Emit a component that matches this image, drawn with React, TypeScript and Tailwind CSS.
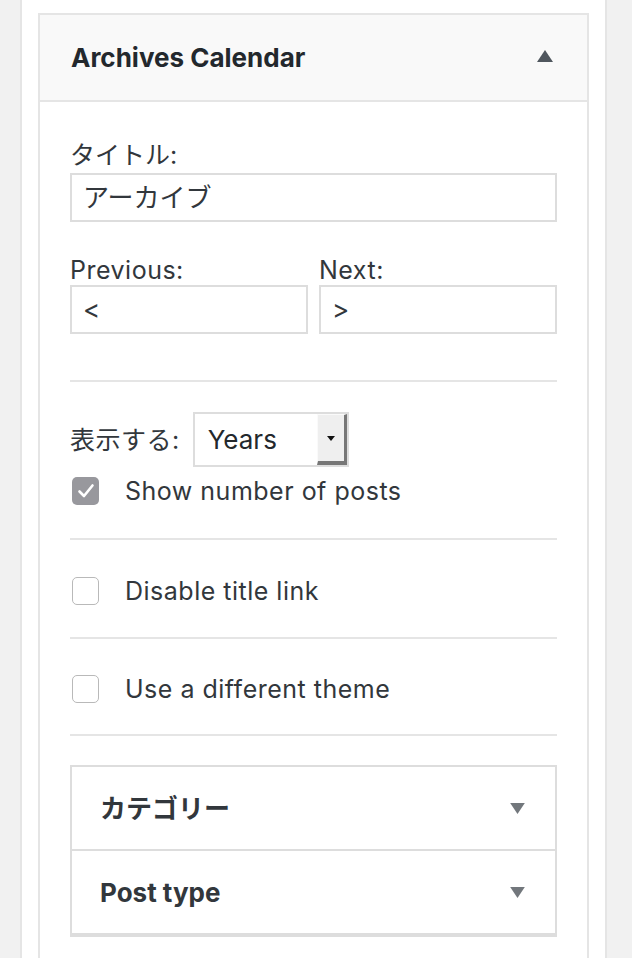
import React from 'react';

const FONT = { fontFamily: 'Inter, "Noto Sans CJK JP", sans-serif' };

function Caret({ up, className }: { up?: boolean; className: string }) {
  return (
    <svg width="16" height="12" viewBox="0 0 16 12" className={className}>
      {up ? <path d="M8 0 L16 12 L0 12 Z" fill="currentColor" /> : <path d="M0 0 L16 0 L8 12 Z" fill="currentColor" />}
    </svg>
  );
}

function Checkbox({ checked, label }: { checked?: boolean; label: string }) {
  return (
    <label className="flex items-center gap-[26px] pl-[2px]">
      {checked ? (
        <span className="w-[27px] h-[28px] rounded-[5px] bg-[#98989d] flex items-center justify-center">
          <svg width="18" height="16" viewBox="0 0 18 16">
            <path d="M2.5 8.5 L7 13 L15.5 2.5" stroke="#fff" strokeWidth="2.6" fill="none" strokeLinecap="round" strokeLinejoin="round" />
          </svg>
        </span>
      ) : (
        <span className="w-[27px] h-[28px] rounded-[5px] border border-[#b9b9b9] bg-white" />
      )}
      <span className="text-[25px] leading-[28px] tracking-[0.02em] text-[#32373c]">{label}</span>
    </label>
  );
}

function TextBox({ value }: { value: string }) {
  return (
    <div className="h-[49px] border-2 border-[#dddddd] bg-white flex items-center px-[11px] text-[26px] text-[#32373c]">
      {value}
    </div>
  );
}

export default function App() {
  return (
    <div className="min-h-[958px] bg-[#f1f1f1] pl-[20px] pr-[25px]" style={FONT}>
      <div className="min-h-[958px] bg-white border-x-2 border-[#e5e5e5] px-[16px] pt-[13px]">
        <div className="border-2 border-[#e5e5e5] min-h-[960px]">
          {/* Widget header */}
          <div className="h-[87px] bg-[#f9f9f9] border-b-2 border-[#e5e5e5] flex items-center justify-between pl-[31px] pr-[34px]">
            <h2 className="text-[26px] font-bold text-[#23282d]">Archives Calendar</h2>
            <Caret up className="text-[#50575e] -mt-[3px]" />
          </div>

          <div className="px-[30px] pt-[39px]">
            <div className="text-[25px] leading-[28px] text-[#32373c] mb-[4px]">タイトル:</div>
            <TextBox value="アーカイブ" />

            <div className="flex gap-[11px] mt-[34px]">
              <div className="flex-1">
                <div className="text-[25px] leading-[28px] tracking-[0.02em] text-[#32373c] mb-[1px]">Previous:</div>
                <TextBox value="<" />
              </div>
              <div className="flex-1">
                <div className="text-[25px] leading-[28px] tracking-[0.02em] text-[#32373c] mb-[1px]">Next:</div>
                <TextBox value=">" />
              </div>
            </div>

            <div className="h-[2px] bg-[#e5e5e5] mt-[46px]" />

            {/* Display select */}
            <div className="flex items-center gap-[13px] mt-[30px]">
              <span className="text-[25px] leading-[28px] tracking-[0.02em] text-[#32373c]">表示する:</span>
              <div className="w-[156px] h-[55px] border-2 border-[#dddddd] flex bg-white">
                <div className="flex-1 flex items-center pl-[13px] text-[26px] text-[#23282d]">Years</div>
                <div className="w-[30px] bg-[#efefef] border-t border-l border-t-[#fafafa] border-l-[#fafafa] border-r-[3px] border-b-[4px] border-r-[#777] border-b-[#777] flex items-center justify-center">
                  <svg width="8" height="5" viewBox="0 0 8 5">
                    <path d="M0 0 L8 0 L4 5 Z" fill="#111" />
                  </svg>
                </div>
              </div>
            </div>

            <div className="mt-[10px]">
              <Checkbox checked label="Show number of posts" />
            </div>

            <div className="h-[2px] bg-[#e5e5e5] mt-[33px]" />

            <div className="pt-[37px] pb-[32px]">
              <Checkbox label="Disable title link" />
            </div>

            <div className="h-[2px] bg-[#e5e5e5]" />

            <div className="pt-[36px] pb-[31px]">
              <Checkbox label="Use a different theme" />
            </div>

            <div className="h-[2px] bg-[#e5e5e5]" />

            {/* Collapsible sections */}
            <div className="mt-[29px] border-2 border-b-4 border-[#dddddd]">
              <div className="h-[84px] flex items-center justify-between pl-[28px] pr-[30px] border-b-2 border-[#dddddd]">
                <span className="text-[26px] font-bold text-[#32373c]">カテゴリー</span>
                <Caret className="text-[#72777c] w-[15px] h-[11px]" />
              </div>
              <div className="h-[82px] flex items-center justify-between pl-[28px] pr-[30px]">
                <span className="text-[26px] font-bold text-[#32373c]">Post type</span>
                <Caret className="text-[#72777c] w-[15px] h-[11px]" />
              </div>
            </div>
          </div>
        </div>
      </div>
    </div>
  );
}
